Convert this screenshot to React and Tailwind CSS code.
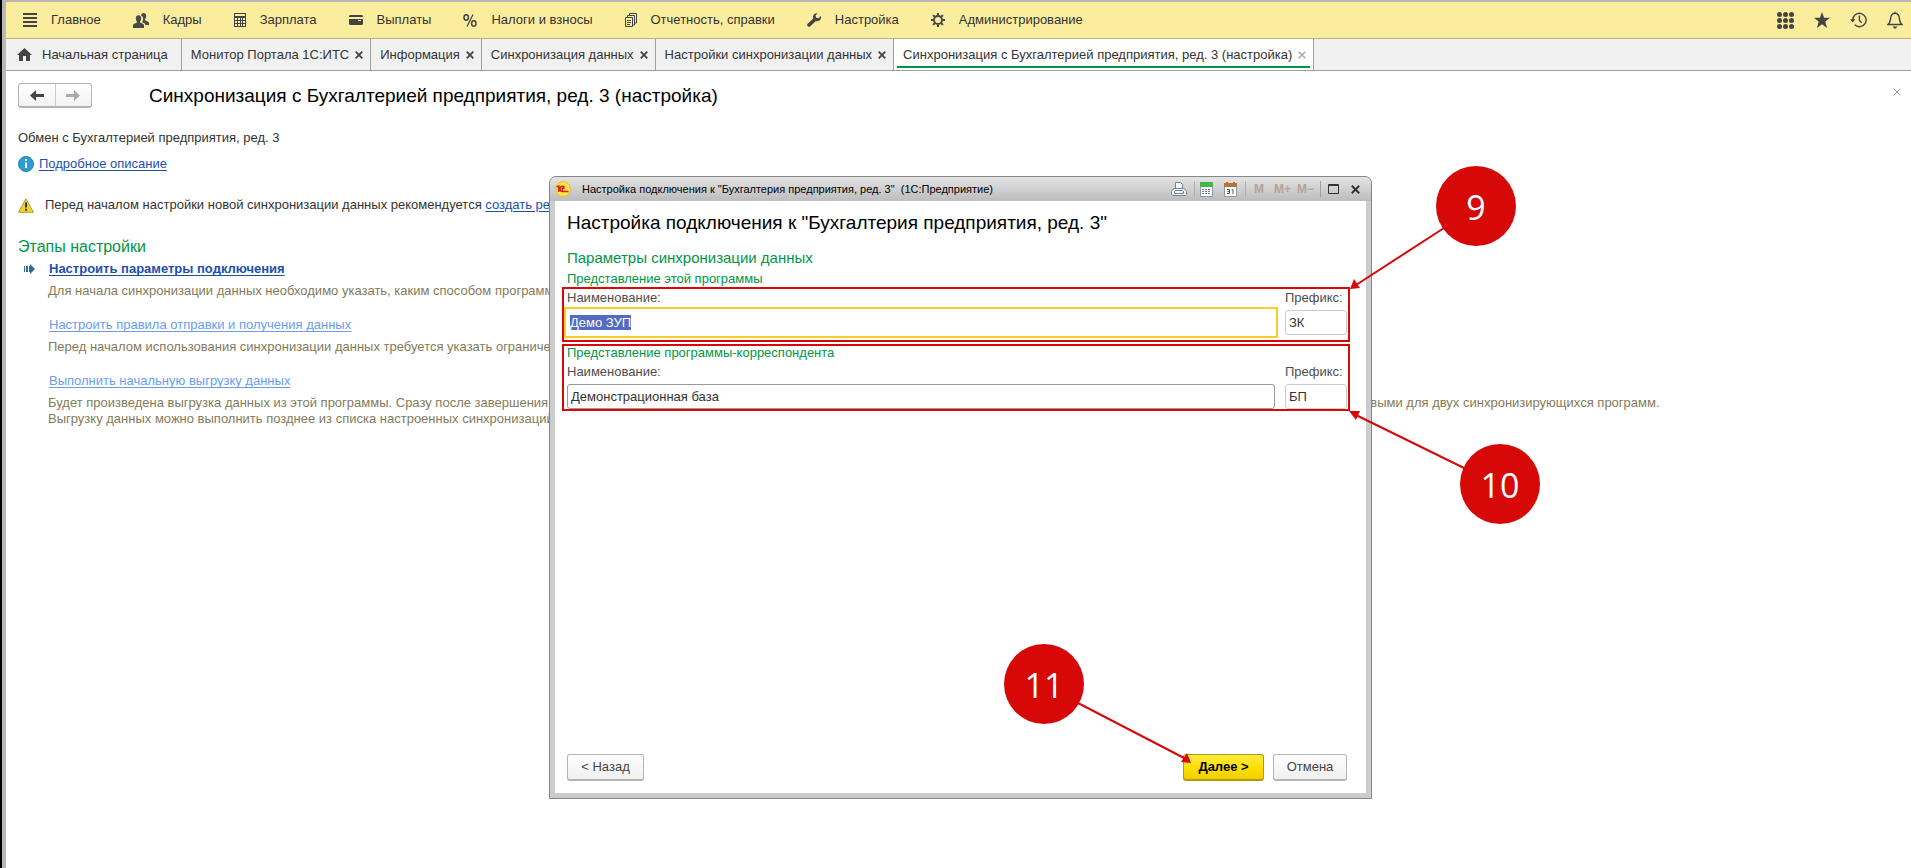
import { useEffect, useRef } from 'react'

const MENU = [
  { label: 'Главное', icon: MenuIcon },
  { label: 'Кадры', icon: PeopleIcon },
  { label: 'Зарплата', icon: CalculatorIcon },
  { label: 'Выплаты', icon: CardIcon },
  { label: 'Налоги и взносы', icon: PercentIcon },
  { label: 'Отчетность, справки', icon: ReportsIcon },
  { label: 'Настройка', icon: WrenchIcon },
  { label: 'Администрирование', icon: GearIcon },
]

const TABS = [
  { label: 'Монитор Портала 1С:ИТС' },
  { label: 'Информация' },
  { label: 'Синхронизация данных' },
  { label: 'Настройки синхронизации данных' },
  { label: 'Синхронизация с Бухгалтерией предприятия, ред. 3 (настройка)', active: true },
]

const STEPS = [
  {
    title: 'Настроить параметры подключения',
    current: true,
    lines: ['Для начала синхронизации данных необходимо указать, каким способом программы будут обмениваться данными.'],
  },
  {
    title: 'Настроить правила отправки и получения данных',
    lines: ['Перед началом использования синхронизации данных требуется указать ограничения на отправку и получение данных.'],
  },
  {
    title: 'Выполнить начальную выгрузку данных',
    lines: [
      'Будет произведена выгрузка данных из этой программы. Сразу после завершения выгрузки рекомендуется выполнить сопоставление данных, чтобы выявить все справочники и др. объекты, которые являются одинаковыми для двух синхронизирующихся программ.',
      'Выгрузку данных можно выполнить позднее из списка настроенных синхронизаций данных.',
    ],
  },
]

function MenuIcon() {
  return (
    <svg width="14" height="14" viewBox="0 0 14 14" fill="#444" aria-hidden="true">
      <path d="M0 0h14v2H0zM0 4h14v2H0zM0 8h14v2H0zM0 12h14v2H0z" />
    </svg>
  )
}

function PeopleIcon() {
  return (
    <svg width="16" height="15" viewBox="0 0 16 15" fill="#4a4a4a" aria-hidden="true">
      <path d="M8 2.600C8.200 1 9.200 0 10.600 0c1.600 0 2.600 1.200 2.600 3 0 1.400-.5 2.500-1.100 3.100v1.200l2.900 1.400c.7.300 1 .8 1 1.600V12h-3.600c-.2-1.100-.7-1.700-1.600-2.100l-1.700-.7c.6-.9 1-2 1-3.300C10.100 4.100 9.400 3 8 2.600z" />
      <path d="M2.800 5.200c0-1.900 1-3 2.700-3s2.700 1.100 2.700 3c0 1.500-.5 2.600-1.200 3.200v1.200l2.900 1.100c.8.300 1.100.9 1.100 1.700V15H0v-2.600c0-.8.300-1.400 1.100-1.700L4 9.600V8.400c-.7-.6-1.200-1.700-1.200-3.200z" />
    </svg>
  )
}

function CalculatorIcon() {
  return (
    <svg width="12" height="14" viewBox="0 0 12 14" aria-hidden="true">
      <path fill="#444" fillRule="evenodd" d="M0 0h12v14H0zM1 1v2h10V1zM1 5v2h2V5zM4 5v2h2V5zM7 5v2h1V5zM9 5v2h2V5zM1 8v2h2V8zM4 8v2h2V8zM7 8v2h1V8zM9 8v2h2V8zM1 11v2h2v-2zM4 11v2h2v-2zM7 11v2h1v-2zM9 11v2h2v-2z" />
    </svg>
  )
}

function CardIcon() {
  return (
    <svg width="14" height="10" viewBox="0 0 14 10" fill="#444" aria-hidden="true">
      <path d="M1 0h12l1 1v1H0V1zM0 4h14v5l-1 1H1L0 9zM9 5v1h3V5z" fillRule="evenodd" />
    </svg>
  )
}

function PercentIcon() {
  return (
    <svg width="14" height="13" viewBox="0 0 14 13" fill="none" stroke="#444" strokeWidth="1.500" aria-hidden="true">
      <ellipse cx="3.200" cy="3.500" rx="2.200" ry="2.700" />
      <ellipse cx="10.800" cy="9.500" rx="2.200" ry="2.700" />
      <path d="M10 .5l-6 12" strokeWidth="1.300" />
    </svg>
  )
}

function ReportsIcon() {
  return (
    <svg width="12" height="14" viewBox="0 0 12 14" fill="none" stroke="#444" aria-hidden="true">
      <path d="M.5 4.500h7v9h-7zM2.500 4.500v-2h7V12h-2M4.500 2.500v-2h7V10h-2M2 7.500h4M2 9.500h4M2 11.500h3" />
    </svg>
  )
}

function WrenchIcon() {
  return (
    <svg width="14" height="14" viewBox="0 0 14 14" fill="#444" aria-hidden="true">
      <path d="M10.500.2L8.600 2.500l.5 2.300 2.400.4L13.700 3c.8 2-.1 4-1.800 4.800-1 .5-2.100.5-3 .2l-5.600 5.300c-.7.700-1.700.7-2.500 0-.8-.7-.8-1.800-.1-2.500l5.500-5.300c-.5-1.900.1-3.700 1.500-4.700.8-.6 1.900-.8 2.800-.6z" />
    </svg>
  )
}

function GearIcon() {
  return (
    <svg width="14" height="14" viewBox="0 0 14 14" fill="none" stroke="#444" aria-hidden="true">
      <circle cx="7" cy="7" r="4" strokeWidth="1.800" />
      <path strokeWidth="2" d="M7 0v2.500M7 11.500V14M0 7h2.500M11.500 7H14M2.100 2.100l1.600 1.600M10.300 10.300l1.600 1.600M2.100 11.900l1.600-1.600M10.300 3.700l1.600-1.600" />
    </svg>
  )
}

function HomeIcon() {
  return (
    <svg width="15" height="13" viewBox="0 0 15 13" fill="#444" aria-hidden="true">
      <path d="M7.500 0L15 7h-2v6H9V8H6v5H2V7H0z" />
    </svg>
  )
}

function CrossIcon({ size = 8, color = '#444', width = 2 }) {
  return (
    <svg width={size} height={size} viewBox="0 0 8 8" stroke={color} strokeWidth={width} aria-hidden="true">
      <path d="M.7.7l6.600 6.600M7.300.7L.7 7.300" />
    </svg>
  )
}

function ArrowIcon({ color, flip }) {
  return (
    <svg width="14" height="11" viewBox="0 0 14 11" fill={color} className={flip ? 'rotate-180' : ''} aria-hidden="true">
      <path d="M0 5.500L6 0v4h8v3H6v4z" />
    </svg>
  )
}

function TopActions() {
  return (
    <div className="flex items-center gap-5 pr-2">
      <button aria-label="Функции">
        <svg width="17" height="17" viewBox="0 0 17 17" fill="#444">
          {[2.5, 8.5, 14.5].map((y) => [2.5, 8.5, 14.5].map((x) => <circle key={`${x}-${y}`} cx={x} cy={y} r="2.500" />))}
        </svg>
      </button>
      <button aria-label="Избранное">
        <svg width="16" height="16" viewBox="0 0 16 16" fill="#444">
          <path d="M8 0l2.100 5.800H16l-4.700 3.700L13 16l-5-3.800L3 16l1.700-6.500L0 5.800h5.900z" />
        </svg>
      </button>
      <button aria-label="История">
        <svg width="17" height="16" viewBox="0 0 17 16" fill="none" stroke="#444" strokeWidth="1.400">
          <path d="M2.700 8a6.700 6.700 0 1 1 2 4.800M9.400 3.500v5l2.300 2.300" />
          <path d="M0 7.200h5.400L2.700 10.500z" fill="#444" stroke="none" />
        </svg>
      </button>
      <button aria-label="Уведомления">
        <svg width="16" height="18" viewBox="0 0 16 18" fill="none" stroke="#444" strokeWidth="1.400">
          <path d="M8 .8v1.500M1 13.500c2-1.500 2.300-3 2.600-6C3.900 4.300 5.500 2.300 8 2.300s4.100 2 4.400 5.200c.3 3 .6 4.500 2.600 6z" />
          <path d="M5.500 15.500h5L8.800 17.500H7.200z" fill="#444" stroke="none" />
        </svg>
      </button>
    </div>
  )
}

function MainMenu() {
  return (
    <header className="flex h-[37px] items-center justify-between border-b border-[#c3b56b] bg-[#fbed9e] pl-[17px]">
      <nav className="flex items-center gap-8">
        {MENU.map(({ label, icon: Icon }) => (
          <a key={label} href="#" className="flex items-center gap-[14px] whitespace-nowrap">
            <Icon />
            {label}
          </a>
        ))}
      </nav>
      <TopActions />
    </header>
  )
}

function TabBar() {
  return (
    <div className="flex h-8 border-b border-[#a0a0a0] bg-[#f1f1f1]">
      <button className="flex items-center gap-[10px] border-r border-[#a0a0a0] pr-[13px] pl-[11px] whitespace-nowrap">
        <HomeIcon />
        Начальная страница
      </button>
      {TABS.map(({ label, active }) => (
        <div
          key={label}
          className={`relative flex items-center gap-[6px] border-r border-[#a0a0a0] pr-[7px] pl-[9px] whitespace-nowrap ${active ? 'bg-white' : ''}`}
        >
          <button>{label}</button>
          <button aria-label="Закрыть вкладку">
            <CrossIcon color={active ? '#aaa' : '#444'} width={active ? 1.5 : 1.8} />
          </button>
          {active && <span className="absolute inset-x-[3px] bottom-[2px] h-[2px] bg-[#009646]" />}
        </div>
      ))}
    </div>
  )
}

function Step({ title, current, lines }) {
  return (
    <li className="mb-3">
      <div className="flex h-[22px] items-center">
        <span className="w-[31px] pl-[6px]">
          {current && (
            <svg width="11" height="10" viewBox="0 0 11 10" fill="#2f6a95" aria-hidden="true">
              <path d="M0 2h1v6H0zM2 2h2v6H2zM5 2h1V0l5 5-5 5V8H5z" />
            </svg>
          )}
        </span>
        <a
          href="#"
          className={`underline underline-offset-2 ${current ? 'font-bold text-[#1d4fae]' : 'text-[#6a9cf5]'}`}
        >
          {title}
        </a>
      </div>
      <div className="py-[3px] pl-[30px] text-[#857b5a]">
        {lines.map((line) => (
          <p key={line} className="leading-4 whitespace-nowrap">{line}</p>
        ))}
      </div>
    </li>
  )
}

function SyncPage() {
  return (
    <main className="overflow-hidden px-3 pt-3">
      <div className="flex items-center">
        <div className="flex h-[25px] w-[74px] rounded-[3px] border border-b-2 border-[#b4b4b4] bg-linear-to-b from-white to-[#f2f2f2]">
          <button aria-label="Назад" className="flex flex-1 items-center justify-center border-r border-[#ccc]">
            <ArrowIcon color="#444" />
          </button>
          <button aria-label="Вперед" className="flex flex-1 items-center justify-center">
            <ArrowIcon color="#aaa" flip />
          </button>
        </div>
        <h1 className="ml-[57px] flex-1 text-[19px] leading-6 text-black">
          Синхронизация с Бухгалтерией предприятия, ред. 3 (настройка)
        </h1>
        <button aria-label="Закрыть" className="-mt-2 -mr-[2px]">
          <CrossIcon color="#999" width={1} />
        </button>
      </div>

      <p className="mt-5 leading-5">Обмен с Бухгалтерией предприятия, ред. 3</p>
      <p className="mt-[6px] flex items-center gap-[5px] leading-5">
        <svg width="16" height="16" viewBox="0 0 16 16" aria-hidden="true">
          <circle cx="8" cy="8" r="7.500" fill="#2b9fd3" stroke="#1c7fb0" />
          <path d="M7 3h2v2H7zM7 6.500h2V12H7z" fill="#fff" />
        </svg>
        <a href="#" className="text-[#1d4fae] underline underline-offset-2">Подробное описание</a>
      </p>
      <p className="mt-[21px] flex items-center leading-5 whitespace-nowrap">
        <svg width="16" height="15" viewBox="0 0 16 15" className="mr-[11px]" aria-hidden="true">
          <path d="M8 .8L15.500 14.300H.5z" fill="#f3d52f" stroke="#b39a2a" strokeLinejoin="round" />
          <path d="M7 4.500h2v5H7zM7 10.800h2v2H7z" fill="#333" />
        </svg>
        Перед началом настройки новой синхронизации данных рекомендуется&nbsp;
        <a href="#" className="text-[#1d4fae] underline underline-offset-2">создать резервную копию данных</a>
      </p>

      <h2 className="mt-[21px] text-[16px] leading-[22px] text-[#009646]">Этапы настройки</h2>
      <ol>
        {STEPS.map((step) => (
          <Step key={step.title} {...step} />
        ))}
      </ol>
    </main>
  )
}

function TitleBar() {
  return (
    <div className="flex h-6 items-center rounded-t-[6px] bg-linear-to-b from-[#e4e4e4] to-[#bcbcbe] pr-1 pl-[5px] text-[11px] text-black">
      <svg width="16" height="16" viewBox="0 0 16 16" aria-hidden="true">
        <circle cx="8" cy="8" r="7.500" fill="#ffe34f" stroke="#e6c22e" />
        <path d="M1.800 6.200l1.500-1.200h.5V11M9.700 6.400A2.600 2.600 0 1 0 8 10.400h5.500M9 7.800a1 1 0 1 0-.8 1.200" fill="none" stroke="#d8201c" strokeWidth="1.500" />
      </svg>
      <span className="ml-[11px] flex-1 whitespace-pre">
        {'Настройка подключения к "Бухгалтерия предприятия, ред. 3"  (1С:Предприятие)'}
      </span>
      <div className="flex h-full items-center">
        <button aria-label="Печать" className="mr-[7px]">
          <svg width="16" height="15" viewBox="0 0 16 15" fill="#f4f7fa" stroke="#6d8296">
            <path d="M4.500 6.500v-6h5l2 2v4M1.500 7.500l2-1h9l2 1 1 2v3l-1 1h-13l-1-1v-3z" />
            <path d="M3.500 9.500l1-1h7l1 1v2h-9z" />
          </svg>
        </button>
        <button aria-label="Калькулятор" className="flex h-4 items-center border-l border-[#b0b0b0] pr-[11px] pl-[5px]">
          <svg width="13" height="15" viewBox="0 0 13 15">
            <path d="M.5.5h12v14H.5z" fill="#fff" stroke="#8a9aa8" />
            <path d="M0 0h13v5H0z" fill="#41b649" />
            <path d="M2 7h2v1H2zM5 7h2v1H5zM2 9h2v1H2zM5 9h2v1H5zM2 11h2v1H2zM5 11h2v1H5zM8 9h2v1H8zM8 11h2v1H8z" fill="#6d8296" />
            <path d="M8 7h2v1H8z" fill="#d33" />
          </svg>
        </button>
        <button aria-label="Календарь" className="pr-2">
          <svg width="13" height="15" viewBox="0 0 13 15">
            <path d="M.5 1.500h12v13H.5z" fill="#fff" stroke="#8a9aa8" />
            <path d="M0 1h13v4H0zM2 0h2v2H2zM9 0h2v2H9z" fill="#b9703c" />
            <path d="M3 7.500h2.500v4H3M3.500 9.500h2M7.500 8l1.500-.5v4.500" fill="none" stroke="#555" />
          </svg>
        </button>
        <div className="flex h-4 items-center gap-[10px] border-l border-[#b0b0b0] pr-[6px] pl-2 text-[12px] font-bold text-[#b5a396]">
          <button>M</button>
          <div className="flex gap-[6px]">
            <button>M+</button>
            <button>M−</button>
          </div>
        </div>
        <button aria-label="Развернуть" className="flex h-4 items-center border-l border-[#a0a0a0] pr-3 pl-[7px]">
          <svg width="11" height="10" viewBox="0 0 11 10" fill="none" stroke="#333">
            <path d="M.5.5h10v9H.5zM0 1.500h11" />
          </svg>
        </button>
        <button aria-label="Закрыть окно" className="pr-[7px]">
          <CrossIcon size={9} color="#333" width={1.7} />
        </button>
      </div>
    </div>
  )
}

function NameFields({ id, name, prefix, focused }) {
  const ref = useRef(null)

  useEffect(() => {
    if (!focused) return
    ref.current.focus()
    ref.current.select()
  }, [focused])

  return (
    <div className="flex justify-between text-[#4d4d4d]">
      <div className="flex flex-1 flex-col">
        <label htmlFor={`${id}-name`} className="pl-[3px] leading-[18px]">Наименование:</label>
        <input
          id={`${id}-name`}
          ref={ref}
          defaultValue={name}
          className={
            focused
              ? 'h-[31px] border-2 border-[#fccb26] px-1 text-[#333] outline-none selection:bg-[#5368c0]/99 selection:text-white'
              : 'mx-[3px] mt-[3px] h-[25px] rounded-[3px] border border-[#9a9a9a] px-[3px] text-[#333]'
          }
        />
      </div>
      <div className="mr-[1px] ml-[7px] flex w-[62px] flex-col">
        <label htmlFor={`${id}-prefix`} className="leading-[18px]">Префикс:</label>
        <input
          id={`${id}-prefix`}
          defaultValue={prefix}
          className="mt-[3px] h-[25px] w-full rounded-[3px] border border-[#ccc] px-[3px] text-[#333]"
        />
      </div>
    </div>
  )
}

function Badge({ children, className }) {
  return (
    <span
      className={`absolute flex size-20 items-center justify-center rounded-full bg-[#d60808] pt-[2px] font-['Open_Sans',sans-serif] text-[34px] leading-none font-medium text-white ${className}`}
    >
      {children}
    </span>
  )
}

function Callouts() {
  return (
    <div className="pointer-events-none absolute top-0 left-0">
      <svg width="960" height="640" className="absolute max-w-none" fill="#d60808" stroke="#d60808" strokeWidth="2" aria-hidden="true">
        <path d="M894 51L806 108M914 291L806 238M528 526L636 582" />
        <path stroke="none" d="M800 112l4-10 6 9zM799 234l11 0-4 9zM641 586l-4-10-6 9z" />
      </svg>
      <Badge className="top-[-11px] left-[886px]">9</Badge>
      <Badge className="top-[267px] left-[910px]">10</Badge>
      <Badge className="top-[467px] left-[454px]">11</Badge>
    </div>
  )
}

function ConnectionDialog() {
  return (
    <div
      role="dialog"
      aria-label="Настройка подключения"
      className="absolute top-[176px] left-[547px] flex h-[623px] w-[823px] flex-col rounded-t-[7px] border border-[#858585] bg-[#cbccce]"
    >
      <TitleBar />
      <div className="mx-[5px] mb-[5px] flex flex-1 flex-col bg-white pt-2">
        <h2 className="pl-3 text-[19px] leading-7 text-black">
          Настройка подключения к "Бухгалтерия предприятия, ред. 3"
        </h2>
        <h3 className="mt-[9px] pl-3 text-[15px] leading-6 text-[#009646]">Параметры синхронизации данных</h3>
        <p className="pl-3 leading-[17px] text-[#009646]">Представление этой программы</p>

        <section className="mr-4 ml-[7px] h-[55px] border-2 border-[#d60808]">
          <NameFields id="own" name="Демо ЗУП" prefix="ЗК" focused />
        </section>
        <section className="mt-[2px] mr-4 ml-[7px] border-2 border-[#d60808]">
          <p className="pb-[3px] pl-[3px] leading-[14px] text-[#009646]">Представление программы-корреспондента</p>
          <NameFields id="peer" name="Демонстрационная база" prefix="БП" />
        </section>

        <div className="mt-auto flex gap-[9px] px-3 pb-3 text-[#444]">
          <button className="mr-auto h-[27px] w-[77px] rounded-[3px] border border-b-2 border-[#b4b4b4] bg-linear-to-b from-white to-[#f0f0f0]">
            &lt; Назад
          </button>
          <button className="h-[27px] w-[81px] rounded-[3px] border border-b-2 border-[#b09a10] bg-linear-to-b from-[#ffea3a] via-[#ffe000] to-[#f0cf00] font-bold text-black">
            Далее &gt;
          </button>
          <button className="mr-[7px] h-[27px] w-[74px] rounded-[3px] border border-b-2 border-[#b4b4b4] bg-linear-to-b from-white to-[#f0f0f0]">
            Отмена
          </button>
        </div>
      </div>
      <Callouts />
    </div>
  )
}

export default function App() {
  return (
    <div className="relative min-h-screen overflow-hidden border-l-2 border-black bg-white font-['Liberation_Sans',Arial,sans-serif] text-[13px] text-[#333]">
      <div className="min-h-screen border-t-2 border-l-4 border-[#b9b6b8]">
        <MainMenu />
        <TabBar />
        <SyncPage />
      </div>
      <ConnectionDialog />
    </div>
  )
}
